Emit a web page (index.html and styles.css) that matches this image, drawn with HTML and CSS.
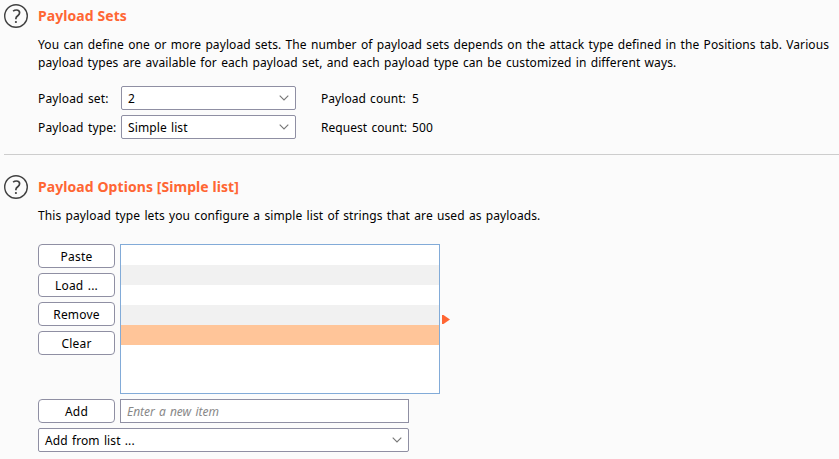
FILE: index.html
```html
<!DOCTYPE html>
<html lang="en">
<head>
<meta charset="utf-8">
<title>Payloads</title>
<link rel="stylesheet" href="styles.css">
</head>
<body>
<section class="panel sets">
  <svg class="help" viewBox="0 0 24 24"><circle cx="12" cy="12" r="11.3"/><path d="M9.1 7.2Q10.6 6 12.4 6Q15.6 6 15.6 8.8Q15.6 10.2 14 11.5Q11.9 13 11.9 14.6V15.3"/><circle class="dot" cx="11.9" cy="18" r="1.1"/></svg>
  <div class="content">
    <h2>Payload Sets</h2>
    <p class="desc">You can define one or more payload sets. The number of payload sets depends on the attack type defined in the Positions tab. Various<br><span class="second-line">payload types are available for each payload set, and each payload type can be customized in different ways.</span></p>
    <div class="form">
      <span class="label">Payload set:</span>
      <div class="select"><span>2</span><svg class="chevron" viewBox="0 0 10 6"><path d="M.7.7 5 5 9.3.7"/></svg></div>
      <span class="label count">Payload count:</span><span class="value">5</span>
      <span class="label">Payload type:</span>
      <div class="select"><span>Simple list</span><svg class="chevron" viewBox="0 0 10 6"><path d="M.7.7 5 5 9.3.7"/></svg></div>
      <span class="label count">Request count:</span><span class="value">500</span>
    </div>
  </div>
</section>
<section class="panel options">
  <svg class="help" viewBox="0 0 24 24"><circle cx="12" cy="12" r="11.3"/><path d="M9.1 7.2Q10.6 6 12.4 6Q15.6 6 15.6 8.8Q15.6 10.2 14 11.5Q11.9 13 11.9 14.6V15.3"/><circle class="dot" cx="11.9" cy="18" r="1.1"/></svg>
  <div class="content">
    <h2>Payload Options [Simple list]</h2>
    <p class="desc">This payload type lets you configure a simple list of strings that are used as payloads.</p>
    <div class="editor">
      <div class="buttons">
        <button>Paste</button><button>Load ...</button><button>Remove</button><button>Clear</button>
      </div>
      <div class="list"><div></div><div></div><div></div><div></div><div class="selected"></div></div>
      <svg class="marker" viewBox="0 0 8 9"><path d="M0 0H1.5L8 4.5 1.5 9H0Z"/></svg>
    </div>
    <div class="add-row"><button>Add</button><input type="text" placeholder="Enter a new item"></div>
    <div class="select wide"><span>Add from list ...</span><svg class="chevron" viewBox="0 0 10 6"><path d="M.7.7 5 5 9.3.7"/></svg></div>
  </div>
</section>
</body>
</html>
```
FILE: styles.css
```css
* { box-sizing: border-box; }
body { margin: 0; height: 459px; overflow: hidden; background: #fbfbfb; color: #000; font: 12px/18px "Noto Sans", "Open Sans", sans-serif; letter-spacing: .1px; word-spacing: 1px; }
.panel { display: flex; align-items: flex-start; gap: 10px; margin-left: 4px; padding-top: 4px; }
.sets { height: 155px; border-bottom: 1px solid #cdcdcd; }
.options { padding-top: 20px; }
.help { flex: none; width: 24px; height: 24px; fill: none; stroke: #404040; stroke-width: 1.4; }
.help path { stroke-width: 1.7; }
.help .dot { fill: #404040; stroke: none; }
.content { flex: 1; min-width: 0; }
h2 { margin: 0; font-size: 14px; line-height: 24px; color: #ff6633; white-space: nowrap; letter-spacing: .07px; word-spacing: 0; }
.desc { margin: 8px 0 0; white-space: nowrap; }
.form { display: grid; grid-template-columns: 83px 175px 116px auto; grid-auto-rows: 24px; row-gap: 5px; margin-top: 14px; align-items: center; }
.label { white-space: nowrap; letter-spacing: .15px; }
.label, .value { padding-top: 2px; }
.count { padding-left: 25px; letter-spacing: .05px; }
.select { display: flex; align-items: center; justify-content: space-between; height: 24px; padding: 0 6px; border: 1px solid #8f8fa3; border-radius: 2px; background: #fff; }
.select span { padding-top: 2px; }
.chevron { width: 10px; height: 6px; fill: none; stroke: #777; stroke-width: 1.1; }
.editor { display: flex; gap: 5px; margin-top: 19px; }
.buttons { display: flex; flex-direction: column; gap: 5px; }
button { width: 77px; height: 24px; padding: 2px 0 0; border: 1px solid #8f8fa3; border-radius: 4px; background: #fff; color: #000; font: inherit; letter-spacing: .2px; word-spacing: 1px; }
.list { width: 320px; height: 150px; border: 1px solid #82abd8; background: #fff; }
.list div { height: 20px; }
.list div:nth-child(even) { background: #f1f1f1; }
.list .selected { background: #ffc599; }
.marker { width: 8px; height: 9px; margin: 71px 0 0 -3px; fill: #ff6633; }
.add-row { display: flex; gap: 5px; margin-top: 5px; }
input { width: 289px; height: 24px; padding: 0 6px; border: 1px solid #8f8fa3; background: #fff; font: inherit; word-spacing: 1px; }
input::placeholder { color: #888; font-style: italic; }
.wide { width: 371px; margin-top: 5px; }
```
